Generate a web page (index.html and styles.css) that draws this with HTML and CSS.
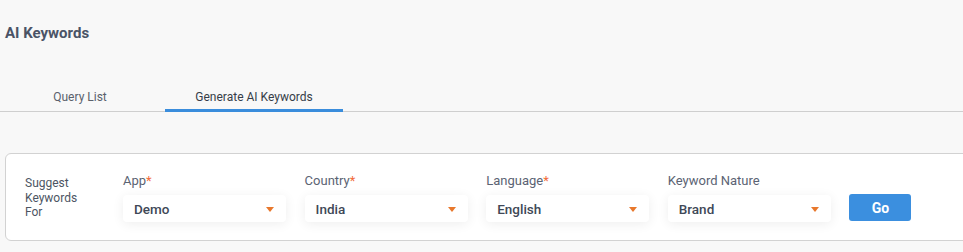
FILE: index.html
```html
<!DOCTYPE html>
<html lang="en">
<head>
  <meta charset="UTF-8">
  <title>AI Keywords</title>
  <link rel="stylesheet" href="styles.css">
</head>
<body>

  <h1 class="page-title">AI Keywords</h1>

  <nav class="tabs">
    <a class="tab tab-first">Query List</a>
    <a class="tab tab-active">Generate AI Keywords</a>
  </nav>

  <section class="card">
    <div class="suggest">Suggest<br>Keywords<br>For</div>

    <div class="field">
      <label>App<span class="req">*</span></label>
      <div class="select"><span>Demo</span><span class="caret"></span></div>
    </div>

    <div class="field">
      <label>Country<span class="req">*</span></label>
      <div class="select"><span>India</span><span class="caret"></span></div>
    </div>

    <div class="field">
      <label>Language<span class="req">*</span></label>
      <div class="select"><span>English</span><span class="caret"></span></div>
    </div>

    <div class="field">
      <label>Keyword Nature</label>
      <div class="select"><span>Brand</span><span class="caret"></span></div>
    </div>

    <button class="btn-go">Go</button>
  </section>

</body>
</html>
```

FILE: styles.css
```css
body {
  font-family: Roboto, "Liberation Sans", Arial, sans-serif;
  margin: 0;
  padding: 0;
  background: #f8f8f8;
  color: #4a5261;
  overflow: hidden;
}
.page-title {
  margin: 0;
  padding: 23px 5px 0;
  font-size: 15px;
  line-height: 20px;
  font-weight: 700;
  color: #4a5366;
}
.tabs {
  display: flex;
  margin-top: 41px;
  border-bottom: 1px solid #cfcfcf;
}
.tab {
  display: block;
  padding: 5px 0 4px;
  font-size: 12px;
  line-height: 16px;
  text-align: center;
  color: #5a616c;
  border-bottom: 3px solid transparent;
  margin-bottom: -1px;
}
.tab-first {
  width: 160px;
  margin-right: 5px;
}
.tab-active {
  width: 178px;
  color: #363d48;
  border-bottom-color: #3a8ddc;
}
.card {
  display: flex;
  align-items: flex-end;
  gap: 18.6px;
  margin: 41px -20px 0 5px;
  padding: 19px 0 18px 19px;
  background: #fff;
  border: 1px solid #d2d2d2;
  border-radius: 6px;
}
.suggest {
  width: 98px;
  margin-right: -18.6px;
  align-self: center;
  font-size: 12px;
  line-height: 14.5px;
  color: #4d5563;
  padding-top: 1px;
}
.field {
  width: 163px;
}
.field label {
  display: block;
  font-size: 13px;
  line-height: 16px;
  color: #5b6373;
  margin-bottom: 6px;
}
.req {
  color: #f26b3a;
}
.select {
  display: flex;
  align-items: center;
  justify-content: space-between;
  height: 27px;
  padding: 0 12px 0 11px;
  background: #fff;
  border-radius: 4px;
  box-shadow: 0 2px 12px rgba(0,0,0,0.07);
  font-size: 13.5px;
  font-weight: 500;
  color: #404857;
}
.caret {
  width: 0;
  height: 0;
  border-left: 4.5px solid transparent;
  border-right: 4.5px solid transparent;
  border-top: 5px solid #e8782c;
  margin-top: 1px;
}
.btn-go {
  width: 62px;
  height: 27px;
  margin: 0 0 1px 0;
  padding: 0;
  border: none;
  border-radius: 3px;
  background: #3b8fdf;
  color: #fff;
  font-family: inherit;
  font-size: 14px;
  font-weight: 700;
  cursor: pointer;
}
```
